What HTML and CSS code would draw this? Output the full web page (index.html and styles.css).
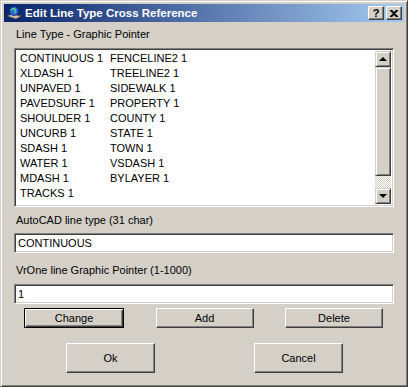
FILE: index.html
```html
<!DOCTYPE html>
<html lang="en">
<head>
    <meta charset="UTF-8">
    <title>Edit Line Type Cross Reference</title>
    <link rel="stylesheet" href="styles.css">
</head>
<body>
    <div class="window">
        <div class="titlebar">
            <svg class="app-icon" width="16" height="16" viewBox="0 0 16 16">
                <path d="M1 11 L6 9 L15 11 L10 14 Z" fill="#c8c0b0" stroke="#5a4a3a" stroke-width="0.8"/>
                <circle cx="8" cy="6" r="4.5" fill="#2a6ad8" stroke="#0a2a7a" stroke-width="0.8"/>
                <path d="M5 5 Q7 3 9 4 Q8 6 10 8" fill="none" stroke="#6ae06a" stroke-width="1.2"/>
            </svg>
            <span class="title">Edit Line Type Cross Reference</span>
            <div class="caption-btns">
                <div class="cap-btn">?</div>
                <div class="cap-btn close">
                    <svg width="8" height="7" viewBox="0 0 8 7"><path d="M0 0h2l2 2 2-2h2v1L5 3.5 8 6v1H6L4 5 2 7H0V6l3-2.5L0 1z" fill="#000"/></svg>
                </div>
            </div>
        </div>
        <div class="content">
            <div class="label first">Line Type - Graphic Pointer</div>
            <div class="listbox">
                <div class="list-items">
                    <div class="col">
                        <div>CONTINUOUS 1</div>
                        <div>XLDASH 1</div>
                        <div>UNPAVED 1</div>
                        <div>PAVEDSURF 1</div>
                        <div>SHOULDER 1</div>
                        <div>UNCURB 1</div>
                        <div>SDASH 1</div>
                        <div>WATER 1</div>
                        <div>MDASH 1</div>
                        <div>TRACKS 1</div>
                        <div>FENCELINE1 1</div>
                    </div>
                    <div class="col">
                        <div>FENCELINE2 1</div>
                        <div>TREELINE2 1</div>
                        <div>SIDEWALK 1</div>
                        <div>PROPERTY 1</div>
                        <div>COUNTY 1</div>
                        <div>STATE 1</div>
                        <div>TOWN 1</div>
                        <div>VSDASH 1</div>
                        <div>BYLAYER 1</div>
                    </div>
                </div>
                <div class="scrollbar">
                    <div class="sb-btn"><span class="arrow up"></span></div>
                    <div class="sb-thumb"></div>
                    <div class="sb-track"></div>
                    <div class="sb-btn"><span class="arrow down"></span></div>
                </div>
            </div>
            <div class="label">AutoCAD line type (31 char)</div>
            <div class="textbox">CONTINUOUS</div>
            <div class="label second">VrOne line Graphic Pointer (1-1000)</div>
            <div class="textbox">1</div>
            <div class="btn-row">
                <div class="btn default">Change</div>
                <div class="btn">Add</div>
                <div class="btn">Delete</div>
            </div>
            <div class="btn-row bottom">
                <div class="btn big">Ok</div>
                <div class="btn big">Cancel</div>
            </div>
        </div>
    </div>
</body>
</html>
```

FILE: styles.css
```css
* { margin: 0; padding: 0; box-sizing: border-box; }
body { font-family: "Liberation Sans", Arial, sans-serif; font-size: 11px; background: #d4d0c8; color: #000; }
.window { width: 408px; height: 387px; background: #d4d0c8; border: 1px solid; border-color: #d4d0c8 #404040 #404040 #d4d0c8; box-shadow: inset 1px 1px #fff, inset -1px -1px #808080; padding: 3px; }
.titlebar { height: 18px; background: linear-gradient(to right, #0a246a, #a6caf0); display: flex; align-items: center; padding: 0 2px 0 2px; }
.app-icon { flex: none; margin-right: 3px; }
.title { color: #fff; font-weight: bold; font-size: 11.5px; flex: 1; white-space: nowrap; }
.caption-btns { display: flex; gap: 2px; }
.cap-btn { width: 16px; height: 14px; background: #d4d0c8; border: 1px solid; border-color: #fff #404040 #404040 #fff; box-shadow: inset -1px -1px #808080; font-weight: bold; font-size: 11px; line-height: 12px; text-align: center; display: flex; align-items: center; justify-content: center; }
.content { padding: 0 10px 0 10px; }
.label { height: 13px; line-height: 13px; margin: 7px 0 6px 2px; }
.label.first { margin-top: 6px; margin-bottom: 7px; }
.label.second { margin-top: 11px; margin-bottom: 7px; }
.listbox { height: 159px; display: flex; background: #fff; border: 1px solid; border-color: #808080 #fff #fff #808080; box-shadow: inset 1px 1px #404040, inset -1px -1px #d4d0c8; padding: 2px; overflow: hidden; }
.list-items { flex: 1; display: flex; padding: 0 0 0 3px; overflow: hidden; }
.col { width: 90px; }
.col div { height: 15px; line-height: 15px; white-space: nowrap; }
.scrollbar { width: 16px; display: flex; flex-direction: column; }
.sb-btn { height: 16px; background: #d4d0c8; border: 1px solid; border-color: #d4d0c8 #404040 #404040 #d4d0c8; box-shadow: inset 1px 1px #fff, inset -1px -1px #808080; display: flex; align-items: center; justify-content: center; }
.sb-thumb { flex: 1; background: #d4d0c8; border: 1px solid; border-color: #d4d0c8 #404040 #404040 #d4d0c8; box-shadow: inset 1px 1px #fff, inset -1px -1px #808080; }
.sb-track { height: 12px; background: repeating-conic-gradient(#d4d0c8 0 25%, #fff 0 50%) 0 0 / 2px 2px; }
.arrow { width: 0; height: 0; border-left: 4px solid transparent; border-right: 4px solid transparent; }
.arrow.up { border-bottom: 4px solid #000; }
.arrow.down { border-top: 4px solid #000; }
.textbox { height: 20px; background: #fff; border: 1px solid; border-color: #808080 #fff #fff #808080; box-shadow: inset 1px 1px #404040, inset -1px -1px #d4d0c8; padding: 0 3px; line-height: 18px; }
.btn-row { display: flex; justify-content: space-between; padding: 0 11px 0 10px; margin-top: 4px; }
.btn { height: 20px; width: 98px; background: #d4d0c8; border: 1px solid; border-color: #fff #404040 #404040 #fff; box-shadow: inset -1px -1px #808080; text-align: center; line-height: 18px; }
.btn.default { width: 100px; border: 1px solid #000; box-shadow: inset 1px 1px #fff, inset -1px -1px #404040, inset -2px -2px #808080; }
.btn-row.bottom { padding: 0 51px 0 52px; margin-top: 15px; }
.btn.big { width: 89px; height: 30px; line-height: 28px; }
```
